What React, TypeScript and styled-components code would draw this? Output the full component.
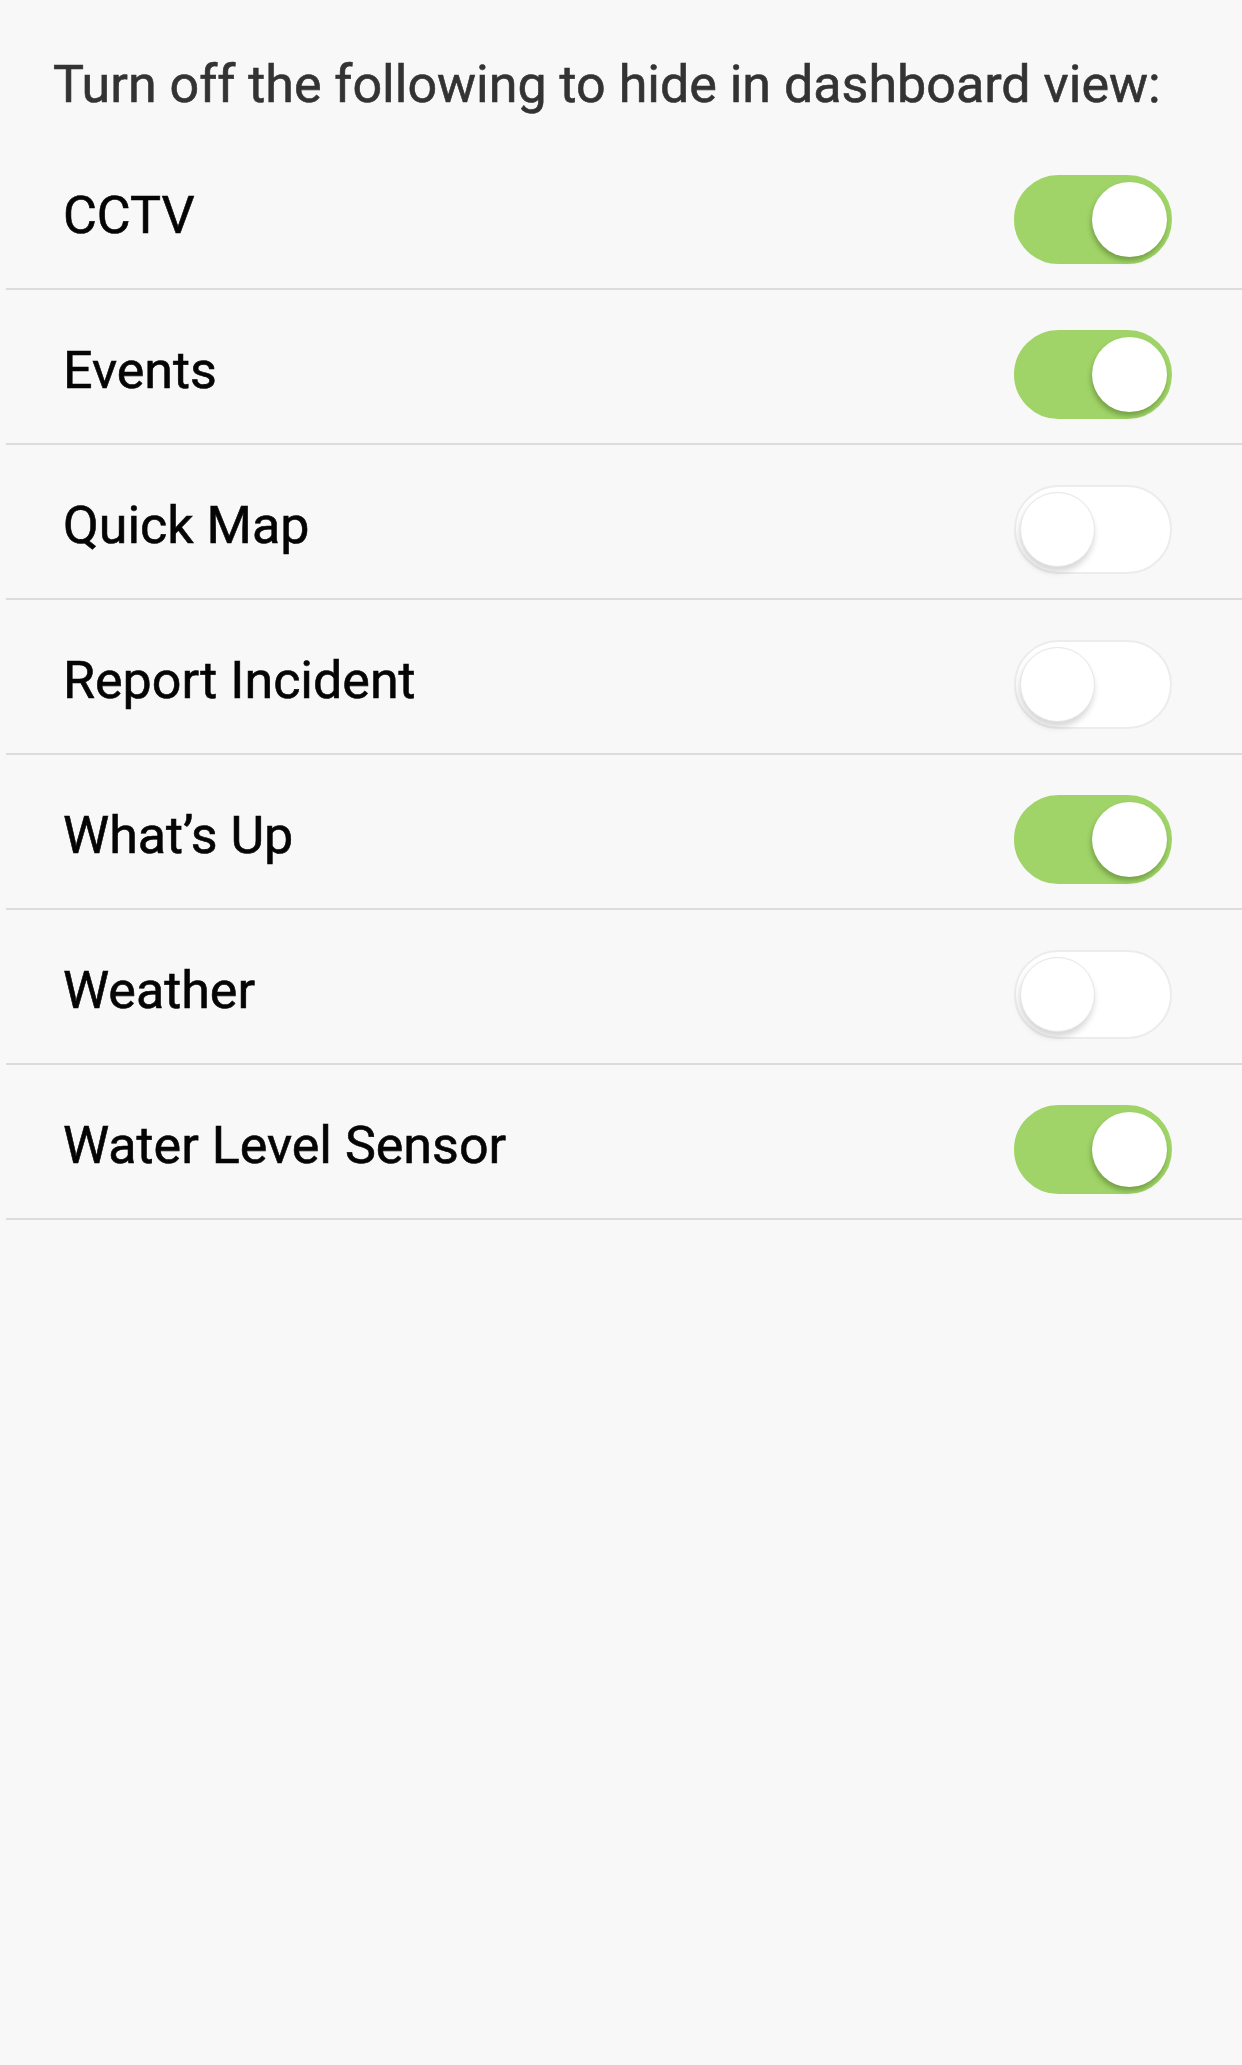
import React from "react";
import styled, { createGlobalStyle } from "styled-components";

const Global = createGlobalStyle`
  html, body {
    margin: 0;
    padding: 0;
    background: #f8f8f8;
  }
  body {
    font-family: Roboto, "Noto Sans", "Liberation Sans", sans-serif;
    -webkit-font-smoothing: antialiased;
  }
`;

const Page = styled.div`
  min-height: 2065px;
  background: #f8f8f8;
  display: flex;
  flex-direction: column;
`;

const Heading = styled.h1`
  margin: 55px 0 0;
  padding: 0 0 20px 53px;
  font-size: 52px;
  line-height: 60px;
  font-weight: 400;
  color: #333333;
  letter-spacing: 0;
  -webkit-text-stroke: 0.6px #333333;
`;

const List = styled.ul`
  list-style: none;
  margin: 0 0 0 6px;
  padding: 0;
  display: flex;
  flex-direction: column;
`;

const Row = styled.li`
  box-sizing: border-box;
  height: 155px;
  padding: 9px 70px 0 57px;
  border-bottom: 2px solid #dcdcdc;
  display: flex;
  align-items: center;
  justify-content: space-between;
`;

const Label = styled.span`
  font-size: 52px;
  line-height: 60px;
  color: #050505;
  font-weight: 400;
  -webkit-text-stroke: 0.6px #050505;
`;

const Track = styled.div<{ $on: boolean }>`
  position: relative;
  box-sizing: border-box;
  width: 158px;
  height: 89px;
  margin-top: 7px;
  border-radius: 45px;
  background: ${(p) => (p.$on ? "#a0d468" : "#ffffff")};
  border: 2px solid ${(p) => (p.$on ? "#a0d468" : "#ececec")};
  flex-shrink: 0;
`;

const Knob = styled.div<{ $on: boolean }>`
  position: absolute;
  box-sizing: border-box;
  top: 5px;
  ${(p) => (p.$on ? "right: 3px;" : "left: 4px;")}
  width: 75px;
  height: 75px;
  border-radius: 50%;
  background: #ffffff;
  border: ${(p) => (p.$on ? "none" : "1.5px solid #e6e6e6")};
  box-shadow: ${(p) =>
    p.$on
      ? "-1px 4px 5px rgba(40, 70, 10, 0.35)"
      : "-1px 5px 6px rgba(0, 0, 0, 0.16)"};
`;

const items: { name: string; on: boolean }[] = [
  { name: "CCTV", on: true },
  { name: "Events", on: true },
  { name: "Quick Map", on: false },
  { name: "Report Incident", on: false },
  { name: "What\u2019s Up", on: true },
  { name: "Weather", on: false },
  { name: "Water Level Sensor", on: true },
];

export default function App() {
  return (
    <Page>
      <Global />
      <Heading>Turn off the following to hide in dashboard view:</Heading>
      <List>
        {items.map((it) => (
          <Row key={it.name}>
            <Label>{it.name}</Label>
            <Track $on={it.on} role="switch" aria-checked={it.on}>
              <Knob $on={it.on} />
            </Track>
          </Row>
        ))}
      </List>
    </Page>
  );
}
